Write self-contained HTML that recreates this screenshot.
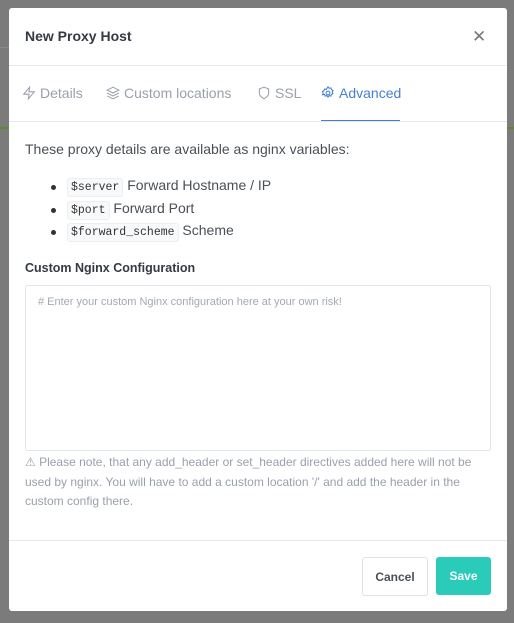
<!DOCTYPE html>
<html><head><style>
body{margin:0;width:514px;height:623px;background:#7b7b7b;font-family:"Liberation Sans",sans-serif;position:relative;overflow:hidden}
.bgl{position:absolute;background:#8a8a8a}
.m{position:absolute;left:9px;top:8px;width:498px;height:603px;background:#fff;border-radius:3px}
.t{position:absolute;left:16px;top:20px;font-size:14px;font-weight:bold;color:#333a44}
.x{position:absolute;left:463px;top:19px;font-size:17px;color:#777}
.hl{position:absolute;left:0;width:498px;height:1px;background:#e6e8eb}
.tab{position:absolute;top:77px;font-size:14px;color:#9aa0ac;display:flex;align-items:center;gap:4px}
.tab svg{width:14px;height:14px;fill:none;stroke:currentColor;stroke-width:1.8}
.p{position:absolute;left:16px;font-size:14px;color:#495057}
code{font-family:"Liberation Mono",monospace;font-size:11.5px;background:#f8f9fa;border:1px solid #eee;border-radius:3px;padding:2px 3px;color:#333}
.li{position:absolute;left:48px;font-size:14px;color:#495057}
.li:before{content:"";position:absolute;left:-6px;top:8px;width:5px;height:5px;border-radius:50%;background:#333}
.li span{margin-left:10px}
.ta{position:absolute;left:16px;top:277px;width:464px;height:164px;border:1px solid #e0e5ec;border-radius:3px}
.ph{position:absolute;left:12px;top:10px;font-size:11px;color:#a3a9b3}
.note{position:absolute;left:16px;top:445px;width:460px;font-size:12px;line-height:19.5px;color:#9aa0ac}
.btn{position:absolute;top:549px;height:37px;border-radius:3px;font-size:12px;font-weight:bold;display:flex;align-items:center;justify-content:center}
</style></head><body>
<div class="bgl" style="left:0;top:47px;width:9px;height:1px"></div>
<div class="bgl" style="left:0;top:127px;width:9px;height:2px;background:#5a8a2a"></div>
<div class="bgl" style="left:507px;top:127px;width:7px;height:2px;background:#5a8a2a"></div>
<div class="m">
<div class="t">New Proxy Host</div>
<div class="x">✕</div>
<div class="hl" style="top:57px"></div>
<div class="tab" style="left:13px"><svg viewBox="0 0 24 24"><path d="M13 2L3 14h9l-1 8 10-12h-9l1-8z"/></svg>Details</div>
<div class="tab" style="left:97px"><svg viewBox="0 0 24 24"><path d="M12 2L2 7l10 5 10-5-10-5zM2 17l10 5 10-5M2 12l10 5 10-5"/></svg>Custom locations</div>
<div class="tab" style="left:248px"><svg viewBox="0 0 24 24"><path d="M12 22s8-4 8-10V5l-8-3-8 3v7c0 6 8 10 8 10z"/></svg>SSL</div>
<div class="tab" style="left:312px;color:#467fcf"><svg viewBox="0 0 24 24"><circle cx="12" cy="12" r="3.2"/><path d="M12 1.5l2 2.5 3-.8.8 3 2.7 1.3-1.3 2.8 1.3 2.7-2.7 1.3-.8 3-3-.8-2 2.5-2-2.5-3 .8-.8-3L2.5 15l1.3-2.7L2.5 9.5l2.7-1.3.8-3 3 .8z"/></svg>Advanced</div>
<div style="position:absolute;left:312px;top:112px;width:79px;height:1px;background:#467fcf"></div>
<div class="hl" style="top:113px"></div>
<div class="p" style="top:133px">These proxy details are available as nginx variables:</div>
<div class="li" style="top:169px"><span><code>$server</code> Forward Hostname / IP</span></div>
<div class="li" style="top:192px"><span><code>$port</code> Forward Port</span></div>
<div class="li" style="top:214px"><span><code>$forward_scheme</code> Scheme</span></div>
<div class="p" style="top:253px;font-size:12.5px;font-weight:bold;color:#333a44">Custom Nginx Configuration</div>
<div class="ta"><div class="ph"># Enter your custom Nginx configuration here at your own risk!</div></div>
<div class="note">⚠ Please note, that any add_header or set_header directives added here will not be used by nginx. You will have to add a custom location '/' and add the header in the custom config there.</div>
<div class="hl" style="top:532px"></div>
<div class="btn" style="left:353px;width:64px;border:1px solid #dfe3e8;color:#495057">Cancel</div>
<div class="btn" style="left:427px;width:55px;height:38px;background:#2bcbba;color:#fff">Save</div>
</div>
</body></html>
